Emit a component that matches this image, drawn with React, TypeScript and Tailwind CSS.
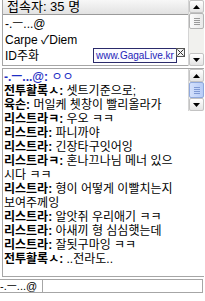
import React from 'react';

const users = ['-.ㅡ...@', 'Carpe ✓Diem', 'ID주화'];

const chatLines: Array<{ name?: string; text: string; blue?: boolean }> = [
  { name: '-.ㅡ...@:', text: ' ㅇㅇ', blue: true },
  { name: '전투활록ㅅ:', text: ' 셋트기준으로;' },
  { name: '육손:', text: ' 머일케 쳇창이 빨리올라가' },
  { name: '리스트라ㅋ:', text: ' 우오 ㅋㅋ' },
  { name: '리스트라:', text: ' 파니까야' },
  { name: '리스트라:', text: ' 긴장타구잇어잉' },
  { name: '리스트라ㅋ:', text: ' 혼나끄나님 메너 있으' },
  { text: '시다 ㅋㅋ' },
  { name: '리스트라:', text: ' 형이 어떻게 이빨치는지' },
  { text: '보여주께잉' },
  { name: '리스트라:', text: ' 알앗쥐 우리애기 ㅋㅋ' },
  { name: '리스트라:', text: ' 아새끼 형 심심햇는데' },
  { name: '리스트라:', text: ' 잘됫구마잉 ㅋㅋ' },
  { name: '전투활록ㅅ:', text: ' ..전라도..' },
];

const Arrow = ({ down }: { down?: boolean }) => (
  <svg width="7" height="4" viewBox="0 0 7 4">
    <path d={down ? 'M0 0H7L3.5 4Z' : 'M0 4H7L3.5 0Z'} fill="#000" />
  </svg>
);

const ArrowButton = ({ down }: { down?: boolean }) => (
  <div className="h-[13px] flex items-center justify-center rounded-[2px] border border-[#c3c3c3] bg-gradient-to-b from-[#ffffff] to-[#e4e4e4]">
    <Arrow down={down} />
  </div>
);

const Thumb = ({ active }: { active?: boolean }) => (
  <div
    className={
      active
        ? 'h-[16px] flex flex-col items-center justify-center gap-[1px] rounded-[2px] border border-[#8fa8dc] bg-gradient-to-r from-[#d3e0fb] to-[#b7ccf7]'
        : 'h-[16px] flex flex-col items-center justify-center gap-[1px] rounded-[2px] border border-[#b4b4b4] bg-gradient-to-r from-[#fbfbfb] to-[#e9e9e9]'
    }
  >
    {[0, 1, 2, 3].map((i) => (
      <div
        key={i}
        className={active ? 'w-[6px] h-[1px] bg-[#7f99d3]' : 'w-[6px] h-[1px] bg-[#9a9a9a]'}
      />
    ))}
  </div>
);

const ScrollBar = ({ active }: { active?: boolean }) => (
  <div className="w-[16px] flex flex-col bg-[#f1f1ee] border-l border-[#d4d4d4]">
    <ArrowButton />
    <Thumb active={active} />
    <div className="flex-1" />
    <ArrowButton down />
  </div>
);

export default function App() {
  return (
    <div
      className="relative w-[205px] h-[301px] bg-white flex flex-col text-[12px] text-black"
      style={{ fontFamily: '"Liberation Sans", "Noto Sans CJK KR", sans-serif' }}
    >
      {/* user list */}
      <div className="h-[66px] flex pl-[2px] pr-[1px]">
        <div className="flex-1 flex flex-col border-l border-b border-[#a6a6a6]">
          <div className="h-[15px] leading-[14px] pl-[4px] text-[13px] border-b border-[#9a9a9a] bg-gradient-to-b from-[#f7f7f7] to-[#e2e2e2]">
            접속자: 35 명
          </div>
          <div className="flex flex-col pt-[1px] pl-[2px]">
            {users.map((u) => (
              <div key={u} className="h-[16px] leading-[16px] whitespace-nowrap">
                {u}
              </div>
            ))}
          </div>
        </div>
        <ScrollBar />
      </div>

      <div className="h-[2px]" />

      {/* chat */}
      <div className="h-[209px] flex pl-[2px] pr-[1px]">
        <div className="flex-1 flex flex-col border-l border-t border-b border-[#a6a6a6] pt-[1px] pl-[1px]">
          {chatLines.map((l, i) => (
            <div
              key={i}
              className={l.blue ? 'h-[14px] leading-[14px] whitespace-nowrap text-[#1f2fc4]' : 'h-[14px] leading-[14px] whitespace-nowrap'}
            >
              {l.name && <span className="font-bold">{l.name}</span>}
              {l.text}
            </div>
          ))}
        </div>
        <div className="flex flex-col border-t border-b border-[#a6a6a6]">
          <ScrollBar active />
        </div>
      </div>

      <div className="h-[2px]" />

      {/* input */}
      <div className="h-[14px] flex border-t border-b border-r border-[#a6a6a6] mr-[2px] text-[11px]">
        <div className="w-[43px] leading-[12px] border-r border-[#a6a6a6] whitespace-nowrap overflow-hidden">
          -.ㅡ...@
        </div>
        <div className="flex-1" />
      </div>

      {/* url tooltip */}
      <div className="absolute left-[93px] top-[48px] flex items-start">
        <div className="h-[15px] px-[2px] leading-[13px] text-[10px] text-[#2424b8] bg-[#fbfbff] border border-[#2a2a6a] whitespace-nowrap">
          www.GagaLive.kr
        </div>
        <div className="w-[9px] h-[9px] -ml-[1px] border border-[#555] bg-[#f4f4f4] flex items-center justify-center">
          <svg width="7" height="7" viewBox="0 0 7 7">
            <path d="M0.5 0.5L6.5 6.5M6.5 0.5L0.5 6.5" stroke="#333" strokeWidth="1" />
          </svg>
        </div>
      </div>
    </div>
  );
}
